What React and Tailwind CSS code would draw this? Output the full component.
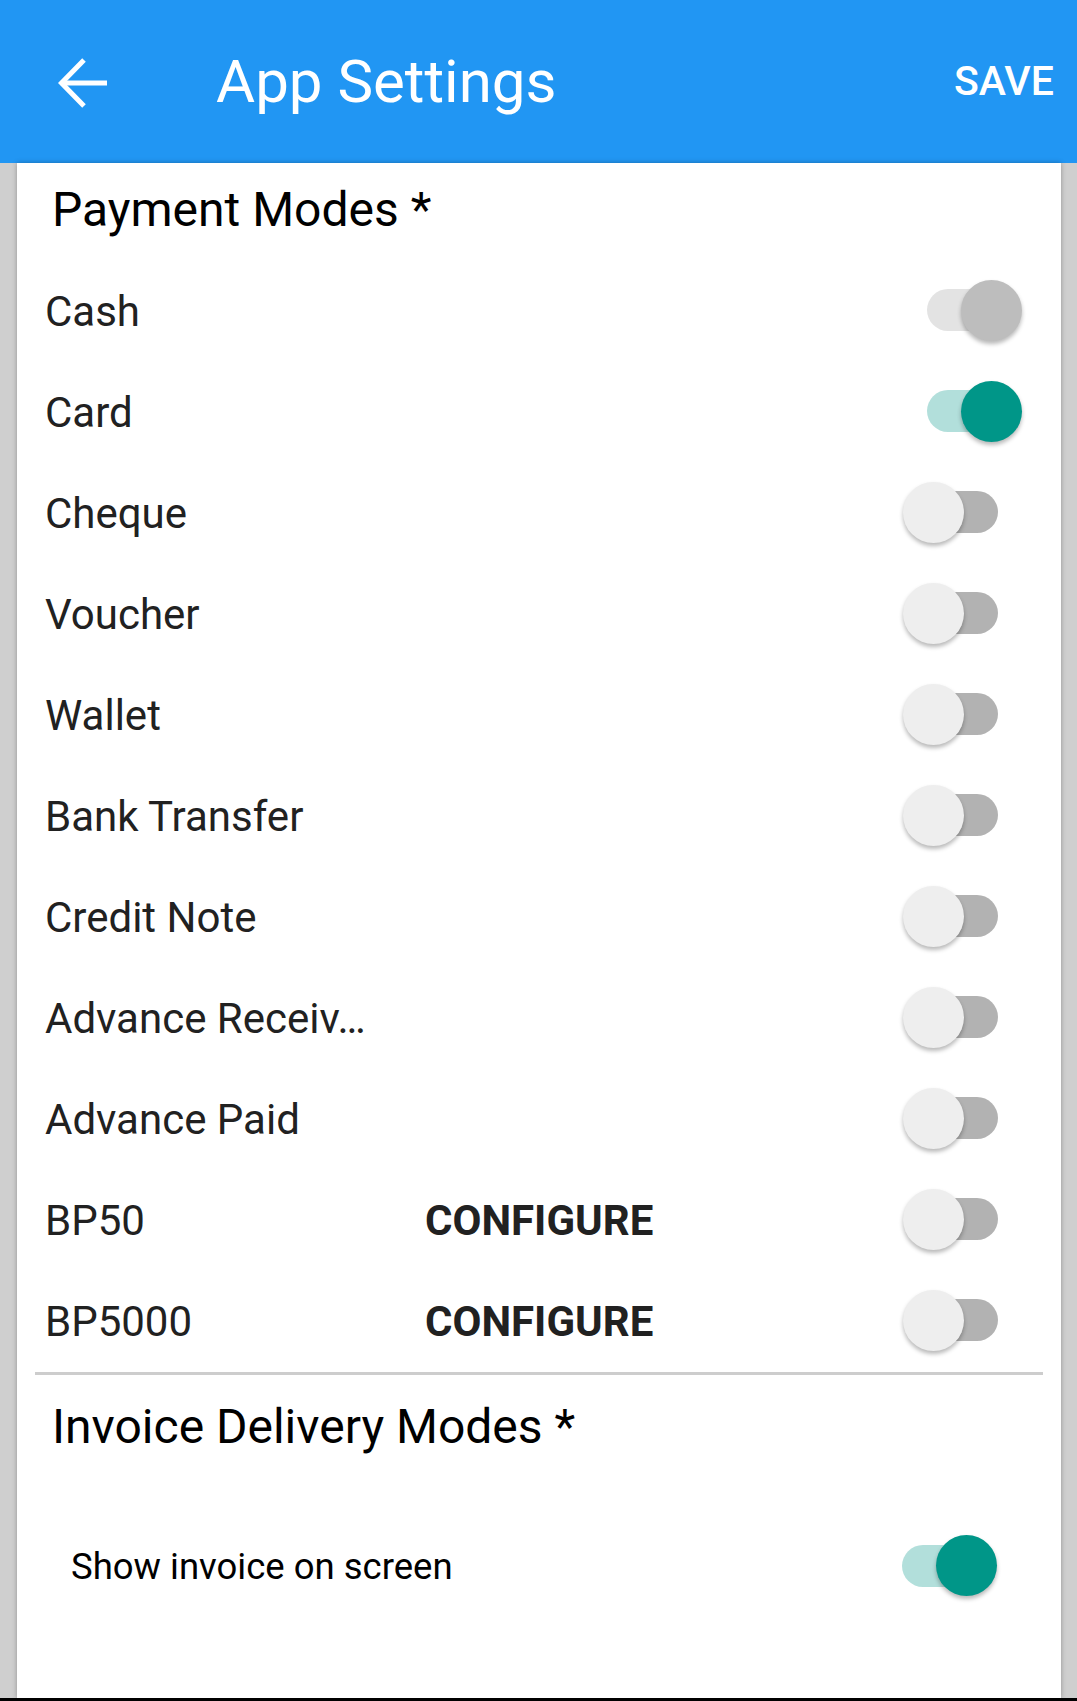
import React, { useState } from "react";

const paymentModes = [
  { label: "Cash", on: true, locked: true, mr: "mr-[39px]" },
  { label: "Card", on: true, mr: "mr-[39px]" },
  { label: "Cheque" },
  { label: "Voucher" },
  { label: "Wallet" },
  { label: "Bank Transfer" },
  { label: "Credit Note" },
  { label: "Advance Receiv…" },
  { label: "Advance Paid" },
  { label: "BP50", configure: true },
  { label: "BP5000", configure: true },
];

const Toggle = ({ on, locked, onClick }) => {
  const track = locked ? "bg-[#e3e3e3]" : on ? "bg-[#b2dfdb]" : "bg-[#b2b2b2]";
  const thumb = locked ? "bg-[#bdbdbd]" : on ? "bg-[#009688]" : "bg-[#eeeeee]";
  return (
    <button
      onClick={onClick}
      className="relative w-[110px] h-[61px] flex items-center shrink-0"
    >
      <span className={`ml-[15px] w-[80px] h-[42px] rounded-full ${track}`} />
      <span
        className={`absolute top-0 w-[61px] h-[61px] rounded-full shadow-[0_3px_4px_rgba(0,0,0,0.28)] ${thumb} ${on ? "left-[49px]" : "left-0"}`}
      />
    </button>
  );
};

export default function App() {
  const [modes, setModes] = useState(paymentModes);
  const [showOnScreen, setShowOnScreen] = useState(true);

  const flip = (i) => {
    if (modes[i].locked) return;
    setModes(modes.map((m, j) => (j === i ? { ...m, on: !m.on } : m)));
  };

  return (
    <div
      className="h-[1701px] flex flex-col bg-[#cfcfcf]"
      style={{ fontFamily: "Roboto, 'Noto Sans', sans-serif" }}
    >
      <header className="h-[163px] shrink-0 bg-[#2196f3] flex items-center text-white">
        <button className="ml-[58px] w-[52px] h-[52px] flex items-center justify-center">
          <svg width="52" height="52" viewBox="0 0 52 52" fill="none" stroke="white" strokeWidth="5">
            <path d="M49 27H4" />
            <path d="M26 4L3.5 27L26 50" strokeLinejoin="miter" />
          </svg>
        </button>
        <h1 className="ml-[106px] text-[60px] leading-none font-normal">App Settings</h1>
        <button className="ml-auto mr-[23px] text-[41px] font-medium leading-none">SAVE</button>
      </header>

      <main className="flex-1 flex pl-[17px] pr-[16px]">
        <div className="flex-1 bg-white shadow-[0_0_5px_rgba(0,0,0,0.3)] flex flex-col">
          <h2 className="h-[98px] flex items-center pl-[35px] pb-[4px] text-[48px] text-black font-normal">
            Payment Modes *
          </h2>

          {modes.map((m, i) => (
            <div key={m.label} className="h-[101px] flex items-center pl-[28px]">
              <span className="w-[380px] text-[42px] text-[#212121]">{m.label}</span>
              {m.configure && (
                <button className="text-[42px] font-bold text-[#212121]">CONFIGURE</button>
              )}
              <div className={`ml-auto -mt-[3px] ${m.mr || "mr-[48px]"}`}>
                <Toggle on={m.on} locked={m.locked} onClick={() => flip(i)} />
              </div>
            </div>
          ))}

          <div className="mx-[18px] h-[3px] bg-[#cdcdcd]" />

          <h2 className="h-[104px] flex items-center pl-[35px] text-[48px] text-black font-normal">
            Invoice Delivery Modes *
          </h2>

          <div className="mt-[38px] h-[100px] flex items-center pl-[54px]">
            <span className="text-[36.5px] text-black">Show invoice on screen</span>
            <div className="ml-auto -mt-[3px] mr-[64px]">
              <Toggle on={showOnScreen} onClick={() => setShowOnScreen(!showOnScreen)} />
            </div>
          </div>
        </div>
      </main>

      <div className="h-[3px] shrink-0 bg-black" />
    </div>
  );
}
